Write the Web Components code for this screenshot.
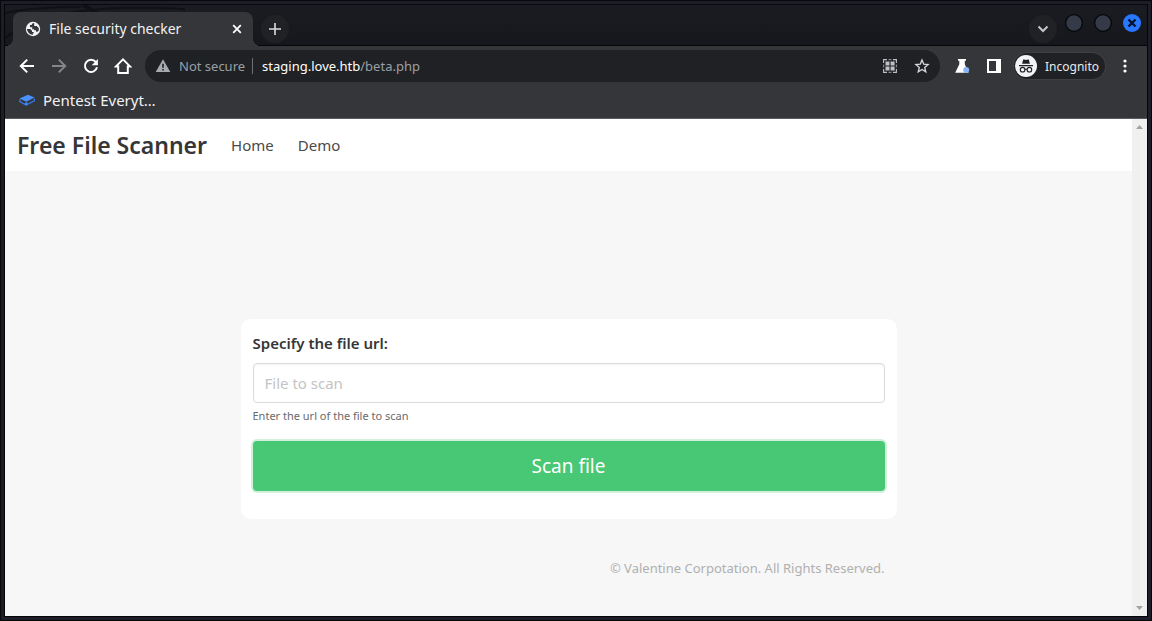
<!DOCTYPE html>
<html lang="en">
<head>
<meta charset="utf-8">
<title>File security checker</title>
<style>
html, body { height: 100%; }
body { margin: 0; background: #0c0d12; font-family: "Noto Sans", sans-serif; }
</style>
</head>
<body>
<browser-window>
  <tab-strip slot="tabs" label="File security checker"></tab-strip>
  <address-bar slot="toolbar" host="staging.love.htb" path="/beta.php"></address-bar>
  <bookmark-bar slot="bookmarks">Pentest Everyt…</bookmark-bar>
  <site-nav><span slot="brand">Free File Scanner</span></site-nav>
  <scan-form></scan-form>
  <site-footer>© Valentine Corpotation. All Rights Reserved.</site-footer>
</browser-window>

<script>
const make = (name, html) => customElements.define(name, class extends HTMLElement {
  constructor() {
    super();
    const t = document.createElement('template');
    t.innerHTML = html;
    this.attachShadow({ mode: 'open' }).append(t.content.cloneNode(true));
  }
  connectedCallback() {
    this.shadowRoot.querySelectorAll('[data-text]').forEach(n => {
      n.textContent = this.getAttribute(n.dataset.text) || '';
    });
  }
});

make('browser-window', `
<style>
:host { display: flex; flex-direction: column; box-sizing: border-box; min-height: 100%; padding: 4px 5px 5px; background: #1c1d27; box-shadow: inset 0 0 0 1px #07080b; }
header { position: relative; z-index: 1; background: #35363a; border-bottom: 1px solid #5b5c60; box-shadow: -1px 0 #050608, 1px 0 #050608; }
.view { flex: 1; display: flex; background: #f7f7f7; box-shadow: 0 0 0 1px #050608; }
main { flex: 1; min-width: 0; display: flex; flex-direction: column; }
.scroll { width: 15px; background: #f0f0f0; display: flex; flex-direction: column; justify-content: space-between; align-items: center; padding: 6px 0; box-sizing: border-box; }
svg { display: block; fill: #a3a3a3; }
</style>
<header><slot name="tabs"></slot><slot name="toolbar"></slot><slot name="bookmarks"></slot></header>
<div class="view">
  <main><slot></slot></main>
  <div class="scroll">
    <svg width="7" height="4"><path d="M0 4L3.5 0L7 4z"/></svg>
    <svg width="7" height="4"><path d="M0 0L3.5 4L7 0z"/></svg>
  </div>
</div>`);

make('tab-strip', `
<style>
:host { display: flex; align-items: flex-end; height: 42px; padding-left: 8px; background: linear-gradient(#1b1c22, #15171d); border-top: 1px solid #08090c; box-shadow: inset 0 -1px #050608; box-sizing: border-box; position: relative; overflow: hidden; }
.art { position: absolute; left: 0; top: 0; }
.tab { position: relative; display: flex; align-items: center; width: 240px; height: 34px; padding: 0 10px 0 12px; box-sizing: border-box; background: #35363a; border-radius: 8px 8px 0 0; color: #f1f3f4; font-size: 14px; line-height: 20px; }
.tab::before, .tab::after { content: ""; position: absolute; bottom: 0; width: 8px; height: 8px; }
.tab::before { right: 100%; background: radial-gradient(circle at 0 0, transparent 8px, #35363a 8px); }
.tab::after { left: 100%; background: radial-gradient(circle at 100% 0, transparent 8px, #35363a 8px); }
.tab span { flex: 1; padding-left: 8px; white-space: nowrap; }
button { border: 0; padding: 0; background: none; display: grid; place-items: center; }
.close { width: 12px; height: 20px; }
.round { width: 28px; height: 28px; border-radius: 50%; background: #202124; }
.new { margin: 0 auto 3px 8px; }
.list { margin-bottom: 3px; }
.win { display: flex; gap: 9px; align-self: flex-start; margin: 8px 5px 0 7px; }
.win button { width: 20px; height: 20px; border-radius: 50%; }
svg { display: block; }
</style>
<svg class="art" width="180" height="41" viewBox="0 0 180 41" fill="none" stroke="#101116" stroke-width="2"><path d="M0 8Q30 2 76 2M0 34Q30 5 120 3T176 12"/><path d="M78 0l14 8" stroke-width="4"/></svg>
<div class="tab">
  <svg width="16" height="16" viewBox="0 0 16 16"><circle cx="8" cy="8" r="7.2" fill="#f1f3f4"/><path d="M9.2 2.1Q6.8 2.1 6.6 4.1H5V6.2H7.2V8.2H9.1V9.2H11V10.8H12.4L13.8 9.4V7.2L11.8 5.1H9.2zM1.8 8.1H5.3L7 9.7V11H8.7V12.2H7.8V14Q3 13.5 1.8 8.1z" fill="#35363a"/></svg>
  <span data-text="label"></span>
  <button class="close" aria-label="Close tab"><svg width="10" height="10" viewBox="0 0 10 10" stroke="#fff" stroke-width="1.8"><path d="M1.2 1.2l7.6 7.6M8.8 1.2l-7.6 7.6"/></svg></button>
</div>
<button class="round new" aria-label="New tab"><svg width="12" height="12" stroke="#dadce0" stroke-width="1.6"><path d="M6 0v12M0 6h12"/></svg></button>
<button class="round list" aria-label="Search tabs"><svg width="12" height="8" viewBox="0 0 12 8" fill="none" stroke="#c4c6ca" stroke-width="2"><path d="M1.5 1.5L6 6l4.5-4.5"/></svg></button>
<div class="win">
  <button aria-label="Minimize"><svg width="20" height="20"><circle cx="10" cy="10" r="8.3" fill="#343a47" stroke="#050608" stroke-width="1.2"/></svg></button>
  <button aria-label="Maximize"><svg width="20" height="20"><circle cx="10" cy="10" r="8.3" fill="#343a47" stroke="#050608" stroke-width="1.2"/></svg></button>
  <button aria-label="Close window"><svg width="20" height="20"><circle cx="10" cy="10" r="9" fill="#2777ff"/><path d="M6.5 6.5l7 7M13.5 6.5l-7 7" stroke="#07122b" stroke-width="2.4"/></svg></button>
</div>`);

make('address-bar', `
<style>
:host { display: flex; align-items: center; height: 40px; padding: 0 12px; box-sizing: border-box; color: #e8eaed; }
button { border: 0; padding: 0; background: none; display: grid; place-items: center; width: 20px; height: 20px; margin-right: 12px; color: inherit; font: inherit; }
svg { display: block; }
.omni { flex: 1; display: flex; align-items: center; height: 32px; margin-right: 12px; padding-left: 10px; box-sizing: border-box; border-radius: 16px; background: #202124; font-size: 13px; line-height: 20px; color: #9aa0a6; white-space: nowrap; }
.state { padding: 0 7px 0 8px; }
.url { border-left: 1px solid #6d7075; line-height: 16px; padding-left: 9px; flex: 1; }
.url b { font-weight: 400; color: #fff; }
.omni button:last-child { margin-right: 8px; }
button.panel { margin-right: 10px; }
button.inc { display: flex; gap: 8px; width: auto; height: 26px; margin: 0 10px 0 0; padding: 0 6px 0 1px; border-radius: 13px; background: #202124; font-size: 12px; box-shadow: 0 0 0 1px #3e3f43; }
button.menu { margin: 0; }
</style>
<button aria-label="Back"><svg width="16" height="16" viewBox="0 0 16 16" fill="none" stroke="#fff" stroke-width="2"><path d="M15 8H2M8.2 1.6L1.8 8l6.4 6.4"/></svg></button>
<button aria-label="Forward"><svg width="16" height="16" viewBox="0 0 16 16" fill="none" stroke="#85868a" stroke-width="2"><path d="M1 8h13M7.8 1.6L14.2 8l-6.4 6.4"/></svg></button>
<button aria-label="Reload"><svg width="16" height="16" viewBox="0 0 16 16" fill="none" stroke="#fff" stroke-width="2"><path d="M12.8 4A6.1 6.1 0 1 0 14 9.3"/><path d="M14.9 1v6.2H8.7z" fill="#fff" stroke="none"/></svg></button>
<button aria-label="Home"><svg width="18" height="18" viewBox="0 0 18 18" fill="none" stroke="#fff" stroke-width="2"><path d="M2 9.4H4.2V16H13.8V9.4H16L9 2.4z"/></svg></button>
<div class="omni">
  <svg width="16" height="16" viewBox="0 0 16 16"><path d="M8 1.3L15.3 14H.7z" fill="#a7abb0"/><path d="M8 5.8v4M8 11v1.6" stroke="#202124" stroke-width="1.6"/></svg>
  <span class="state">Not secure</span>
  <span class="url"><b data-text="host"></b><span data-text="path"></span></span>
  <button aria-label="QR code"><svg width="16" height="16" viewBox="0 0 16 16" fill="none" stroke="#bdc1c6" stroke-width="1.1"><path d="M1.6 5V1.6H5M11 1.6h3.4V5M14.4 11v3.4H11M5 14.4H1.6V11" /><path d="M6.5 1.6h3M6.5 14.4h3M1.6 6.5v3M14.4 6.5v3" stroke="#85888c"/><path fill="#bdc1c6" stroke="none" d="M3.5 3.5h4v4h-4zM8.6 3.5h4v4h-4zM3.5 8.6h4v4h-4zM8.6 8.6h4v4h-4z"/></svg></button>
  <button aria-label="Bookmark this page"><svg width="16" height="16" viewBox="0 0 16 16" fill="none" stroke="#d5d8dc" stroke-width="1.3"><path d="M8 2l1.7 4.1 4.4.4-3.4 2.9 1.1 4.4L8 11.5l-3.8 2.3 1.1-4.4-3.4-2.9 4.4-.4z"/></svg></button>
</div>
<button aria-label="Labs"><svg width="16" height="16" viewBox="0 0 16 16"><path d="M4 1h8v1.8h-1.2V6.3L14.6 14.8H1.2L5.3 6.3V2.8H4z" fill="#fff"/><circle cx="12.2" cy="12" r="3" fill="#8ab4f8"/></svg></button>
<button class="panel" aria-label="Side panel"><svg width="14" height="14"><path fill-rule="evenodd" d="M0 0h14v14H0zM2 2v10h7V2z" fill="#fff"/></svg></button>
<button class="inc"><svg width="22" height="22" viewBox="0 0 22 22"><circle cx="11" cy="11" r="11" fill="#f1f3f4"/><path d="M7.1 8.8L8.2 4.6h.9L11 5l1.9-.4h.9L14.9 8.8z" fill="#202124"/><g fill="none" stroke="#202124" stroke-width="1.1"><path d="M4 10.6h14M10 14.5q1-.6 2 0"/><circle cx="7.6" cy="14.7" r="2.3"/><circle cx="14.4" cy="14.7" r="2.3"/></g></svg><span>Incognito</span></button>
<button class="menu" aria-label="Menu"><svg width="4" height="16" fill="#fff"><circle cx="2" cy="3" r="1.6"/><circle cx="2" cy="8" r="1.6"/><circle cx="2" cy="13" r="1.6"/></svg></button>`);

make('bookmark-bar', `
<style>
:host { display: flex; height: 32px; padding: 0 14px 4px; box-sizing: border-box; }
a { display: flex; align-items: center; gap: 8px; color: #f1f3f4; text-decoration: none; font-size: 15px; line-height: 20px; }
</style>
<a href="#"><svg width="16" height="16" viewBox="0 0 16 16"><path d="M.5 6.4L9 2.7l6.5 2.7L7.3 9.8z" fill="#4a91ff"/><path d="M.8 7.3v2.2L7.1 13l8.2-4.2V6.6" fill="none" stroke="#3478ea" stroke-width="1.3"/><circle cx="7.2" cy="11.8" r="1.5" fill="#3f88fb"/></svg><slot></slot></a>`);

make('site-nav', `
<style>
:host { display: block; background: #fff; }
nav { display: flex; align-items: center; height: 52px; }
a { color: #4a4a4a; text-decoration: none; padding: 0 12px; font-size: 15px; line-height: 24px; }
.brand { color: #363636; font-size: 23px; font-weight: 600; line-height: 32px; }
</style>
<nav><a class="brand" href="#"><slot name="brand"></slot></a><a href="#">Home</a><a href="#">Demo</a></nav>`);

make('scan-form', `
<style>
:host { display: block; padding: 148px 12px 0; }
form { width: 100%; max-width: 656px; min-height: 200px; margin: 0 auto; padding: 12px; box-sizing: border-box; background: #fff; border-radius: 10px; }
label { display: block; margin-bottom: 8px; color: #363636; font-size: 15px; font-weight: 600; line-height: 24px; }
input { display: block; width: 100%; height: 40px; box-sizing: border-box; padding: 0 11px; border: 1px solid #dbdbdb; border-radius: 4px; background: #fff; color: #363636; font: 15px/24px "Noto Sans", sans-serif; box-shadow: inset 0 1px 2px #0000000d; }
input::placeholder { color: #c4c4c4; opacity: 1; }
p { margin: 4px 0 16px; color: #6a6a6a; font-size: 11px; line-height: 18px; }
button { display: block; width: 100%; height: 50px; border: 0; border-radius: 4px; background: #48c774; color: #fff; font: 19px/28px "Noto Sans", sans-serif; box-shadow: 0 0 0 2px #48c77440; }
</style>
<form onsubmit="return false">
  <label for="file">Specify the file url:</label>
  <input id="file" type="text" placeholder="File to scan" aria-describedby="help">
  <p id="help">Enter the url of the file to scan</p>
  <button type="submit">Scan file</button>
</form>`);

make('site-footer', `
<style>
:host { display: block; padding: 38px 12px 0; }
footer { width: 100%; max-width: 656px; margin: 0 auto; padding: 0 12px; box-sizing: border-box; text-align: right; color: #b0b0b0; font-size: 13px; line-height: 22px; }
</style>
<footer><slot></slot></footer>`);
</script>
</body>
</html>
